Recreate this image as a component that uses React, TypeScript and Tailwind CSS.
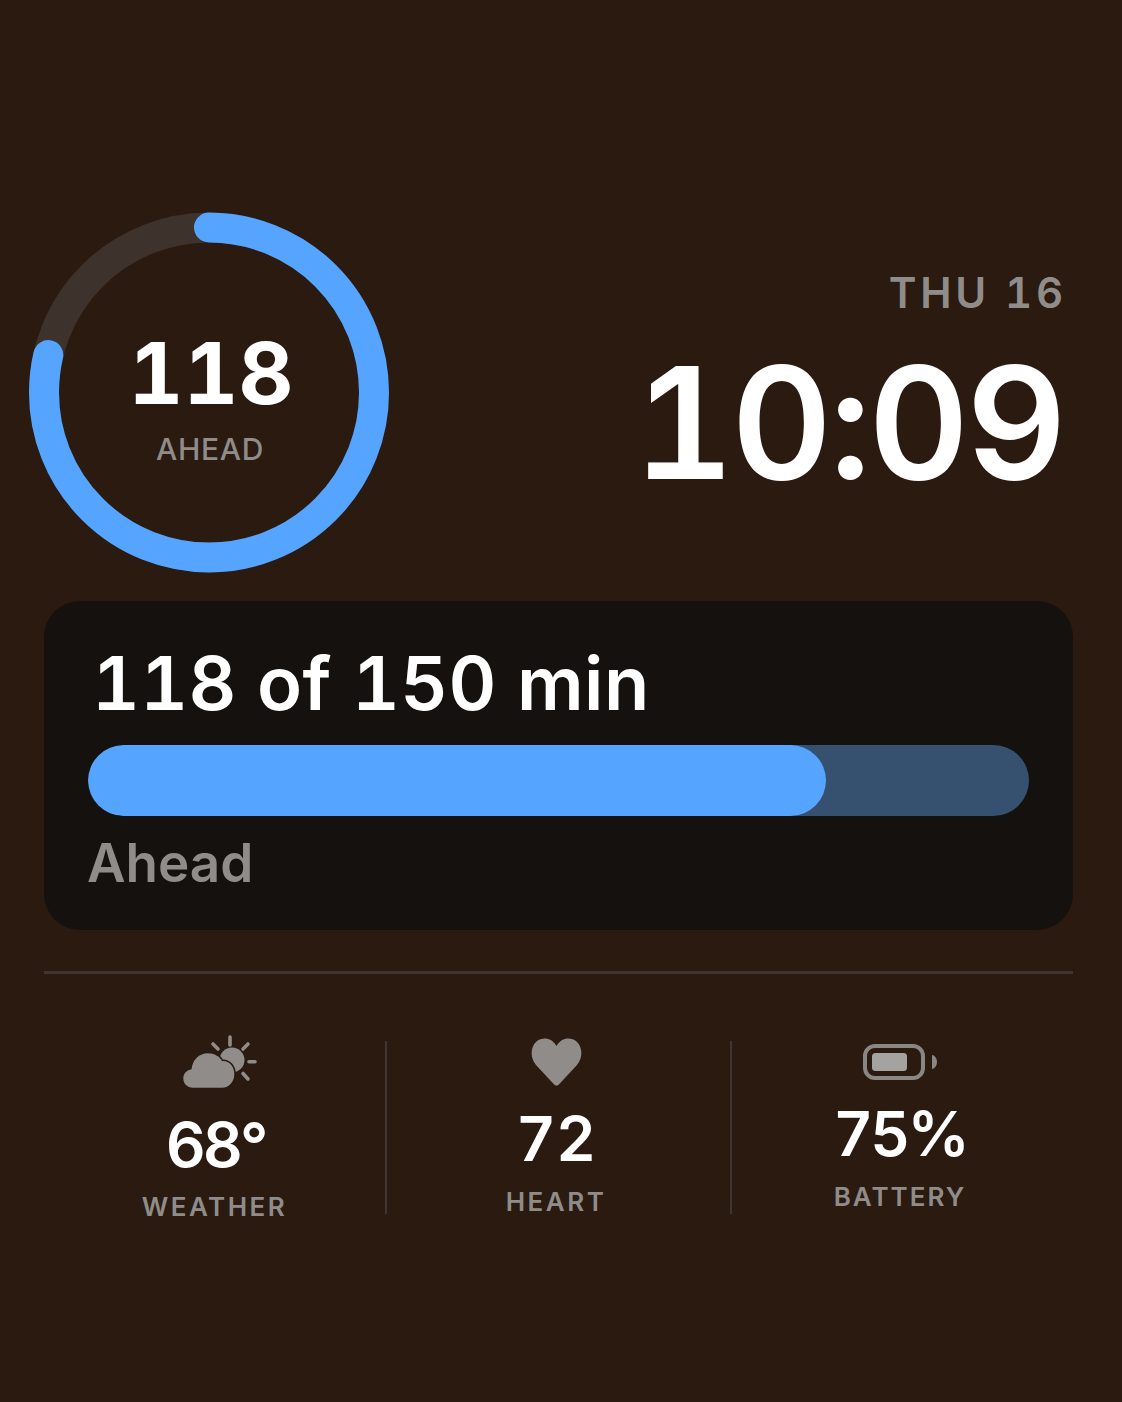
const font = { fontFamily: '"Inter", "Liberation Sans", sans-serif' };

function Ring() {
  const r = 165;
  const circ = 2 * Math.PI * r;
  const done = (283 / 360) * circ;
  return (
    <svg width="360" height="362" viewBox="0 0 360 362" className="block">
      <circle cx="180" cy="181.5" r={r} fill="none" stroke="#3d332c" strokeWidth="30" />
      <circle
        cx="180"
        cy="181.5"
        r={r}
        fill="none"
        stroke="#55a4ff"
        strokeWidth="30"
        strokeLinecap="round"
        strokeDasharray={`${done} ${circ}`}
        transform="rotate(-90 180 181.5)"
      />
    </svg>
  );
}

function WeatherIcon() {
  return (
    <svg width="76" height="56" viewBox="0 0 76 56" fill="none" className="block">
      <g stroke="#8f8c8a" strokeWidth="3.6" strokeLinecap="round">
        <path d="M47 3v8" />
        <path d="M30 10l5 5" />
        <path d="M60 15l5-5" />
        <path d="M66 27.7h6" />
        <path d="M60 39.5l5 5.5" />
      </g>
      <circle cx="49" cy="26" r="12.5" fill="#8f8c8a" />
      <path
        d="M10 53.7C4 53.7.3 49.5.3 44.5.3 39.5 4 36 8.5 35.3 9.5 26 16 19.3 25 19.3c6.5 0 11.5 3.2 14 7.7 7-.5 12.3 5 12.3 13 0 8-5.3 13.7-12.3 13.7Z"
        fill="#8f8c8a"
        stroke="#2a1a10"
        strokeWidth="3"
        paintOrder="stroke"
      />
    </svg>
  );
}

function HeartIcon() {
  return (
    <svg width="51" height="48" viewBox="0 0 51 48" className="block">
      <path
        d="M25.5 47.5c-1 0-1.8-.5-2.6-1.3L5 27C-1 20-.8 9 5.5 3.5 12-1.5 21 0 25.5 8 30 0 39-1.5 45.5 3.5 51.8 9 52 20 46 27L28.1 46.2c-.8.8-1.6 1.3-2.6 1.3Z"
        fill="#8f8c8a"
      />
    </svg>
  );
}

function BatteryIcon() {
  return (
    <svg width="75" height="36" viewBox="0 0 75 36" className="block">
      <rect x="2" y="2" width="58" height="32" rx="10" fill="none" stroke="#8a8684" strokeWidth="4" />
      <rect x="9" y="9" width="35" height="18" rx="3.5" fill="#a5a3a1" />
      <path d="M69 11c3 .6 5 3.6 5 7s-2 6.4-5 7Z" fill="#8a8684" />
    </svg>
  );
}

export default function App() {
  return (
    <div className="h-[1402px] w-[1122px] overflow-hidden bg-[#2a1a10] pl-[44px] pr-[49px] pt-[211px] text-white" style={font}>
      <div className="flex items-start justify-between">
        <div className="relative -ml-[15px] h-[362px] w-[360px]">
          <Ring />
          <div className="absolute inset-0 flex flex-col items-center pt-[113px]">
            <div className="pl-[4px] text-[85px] font-bold leading-[100px] tabular-nums">118</div>
            <div className="ml-[2px] mt-[7px] text-[30px] font-medium leading-[36px] tracking-[0.7px] text-[#8f8c8a]">AHEAD</div>
          </div>
        </div>
        <div className="flex flex-col items-end pr-[9px] pt-[56px]">
          <div className="-mr-[3px] text-[42px] font-semibold leading-[52px] tracking-[3.8px] text-[#8f8c8a] tabular-nums">THU 16</div>
          <div className="mt-[14px] text-[156px] font-semibold leading-[180px] tracking-[-3px] tabular-nums">10:09</div>
        </div>
      </div>

      <div className="mt-[28px] h-[329px] rounded-[36px] bg-[#15110e] px-[44px] pt-[40px]">
        <div className="pl-[4px] text-[74px] font-semibold leading-[84px] tracking-[0.4px] tabular-nums">118 of 150 min</div>
        <div className="mt-[20px] h-[71px] overflow-hidden rounded-full bg-[#36506f]">
          <div className="h-full w-[78.4%] rounded-full bg-[#55a4ff]" />
        </div>
        <div className="-ml-[1px] mt-[12px] text-[53px] font-semibold leading-[70px] text-[#8f8c8a]">Ahead</div>
      </div>

      <div className="mt-[41px] h-[3px] bg-[#3f3531]" />

      <div className="mt-[67px] grid h-[173px] grid-cols-[341px_345px_1fr] grid-rows-[173px]">
        <div className="flex flex-col items-center">
          <div className="-mt-[7px] ml-[12px]">
            <WeatherIcon />
          </div>
          <div className="mt-[19px] pl-[2px] text-[62px] font-semibold leading-[72px] tracking-[-3px] tabular-nums">68°</div>
          <div className="mt-[10px] text-[26px] font-semibold leading-[32px] tracking-[2.5px] text-[#8f8c8a]">WEATHER</div>
        </div>
        <div className="flex flex-col items-center border-l-2 border-[#3f3531] pr-[5px]">
          <div className="-mt-[3px]">
            <HeartIcon />
          </div>
          <div className="mt-[17px] text-[62px] font-semibold leading-[72px] tabular-nums">72</div>
          <div className="mt-[11px] text-[26px] font-semibold leading-[32px] tracking-[2.5px] text-[#8f8c8a]">HEART</div>
        </div>
        <div className="flex flex-col items-center border-l-2 border-[#3f3531] pr-[5px]">
          <div className="mt-[3px]">
            <BatteryIcon />
          </div>
          <div className="mt-[18px] text-[62px] font-semibold leading-[72px] tracking-[-3px] tabular-nums">75%</div>
          <div className="mt-[11px] text-[26px] font-semibold leading-[32px] tracking-[2px] text-[#8f8c8a]">BATTERY</div>
        </div>
      </div>
    </div>
  );
}
